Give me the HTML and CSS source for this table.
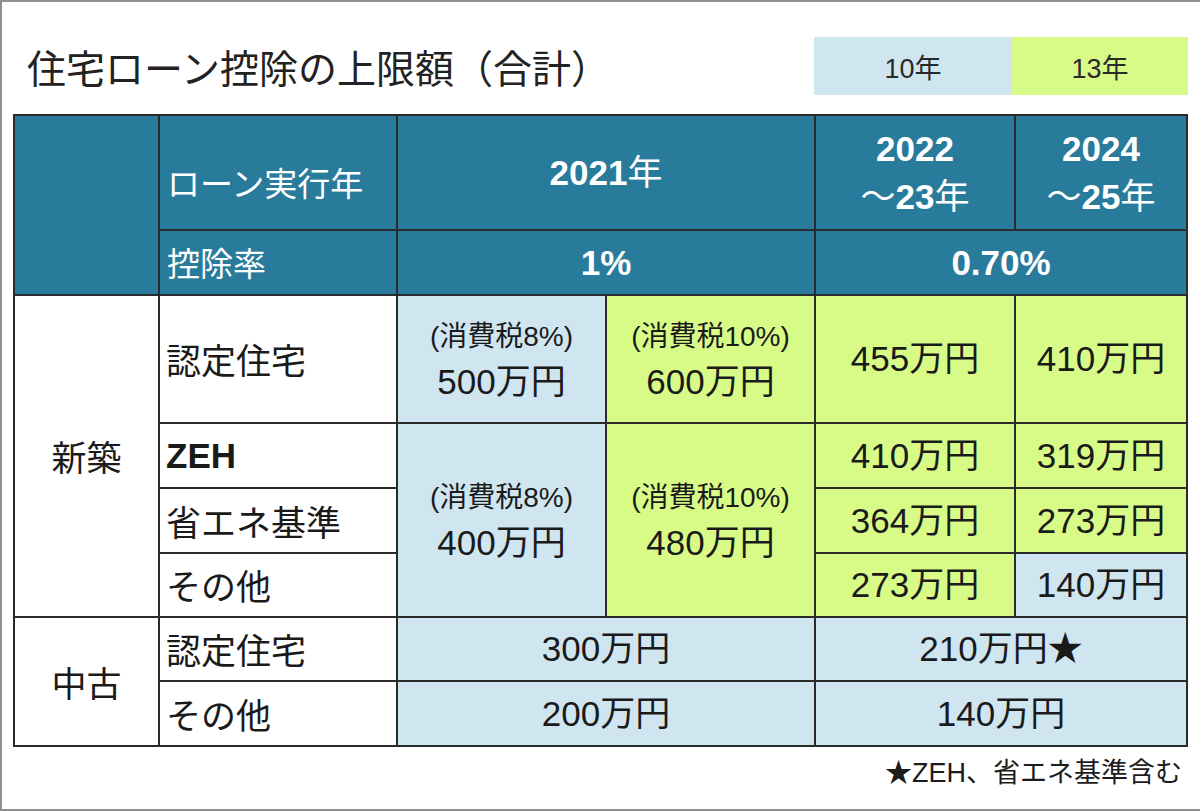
FILE: index.html
```html
<!DOCTYPE html>
<html lang="ja">
<head>
<meta charset="utf-8">
<title>住宅ローン控除の上限額（合計）</title>
<link rel="stylesheet" href="styles.css">
</head>
<body>
<div class="page">
  <header class="top">
    <h1 class="title">住宅ローン控除の上限額（合計）</h1>
    <div class="legend">
      <div class="legend-item blue">10年</div>
      <div class="legend-item green">13年</div>
    </div>
  </header>

  <div class="table">
    <div class="cell head corner"></div>
    <div class="cell head label-head loan">ローン実行年</div>
    <div class="cell head bold span2">2021<span class="reg">年</span></div>
    <div class="cell head bold stack"><span>2022</span><span><span class="reg">〜</span>23<span class="reg">年</span></span></div>
    <div class="cell head bold stack"><span>2024</span><span><span class="reg">〜</span>25<span class="reg">年</span></span></div>

    <div class="cell head label-head">控除率</div>
    <div class="cell head bold span2">1%</div>
    <div class="cell head bold span2">0.70%</div>

    <div class="cell group rspan4">新築</div>
    <div class="cell label">認定住宅</div>
    <div class="cell blue stack2"><span class="small">(消費税8%)</span><span>500万円</span></div>
    <div class="cell green stack2"><span class="small">(消費税10%)</span><span>600万円</span></div>
    <div class="cell green">455万円</div>
    <div class="cell green">410万円</div>

    <div class="cell label zeh">ZEH</div>
    <div class="cell blue stack2 rspan3"><span class="small">(消費税8%)</span><span>400万円</span></div>
    <div class="cell green stack2 rspan3"><span class="small">(消費税10%)</span><span>480万円</span></div>
    <div class="cell green">410万円</div>
    <div class="cell green">319万円</div>

    <div class="cell label">省エネ基準</div>
    <div class="cell green">364万円</div>
    <div class="cell green">273万円</div>

    <div class="cell label">その他</div>
    <div class="cell green">273万円</div>
    <div class="cell blue">140万円</div>

    <div class="cell group rspan2">中古</div>
    <div class="cell label">認定住宅</div>
    <div class="cell blue span2">300万円</div>
    <div class="cell blue span2">210万円★</div>

    <div class="cell label">その他</div>
    <div class="cell blue span2">200万円</div>
    <div class="cell blue span2">140万円</div>
  </div>

  <p class="note">★ZEH、省エネ基準含む</p>
</div>
</body>
</html>
```

FILE: styles.css
```css
* {
  box-sizing: border-box;
  margin: 0;
  padding: 0;
}

html, body {
  margin: 0;
  background: #ffffff;
}

body {
  width: 1200px;
  height: 811px;
  overflow: hidden;
  font-family: "Liberation Sans", "Noto Sans CJK JP", sans-serif;
  color: #1c1c1c;
}

.page {
  width: 1200px;
  height: 811px;
  border-top: 2px solid #8f8f8f;
  border-left: 2px solid #8f8f8f;
  border-bottom: 2px solid #8f8f8f;
  padding: 35px 0 0 11px;
}

.top {
  display: flex;
  justify-content: space-between;
  align-items: center;
  width: 1175px;
  height: 58px;
  margin-bottom: 19px;
}

.title {
  font-family: "Noto Sans CJK JP", sans-serif;
  font-weight: 400;
  font-size: 39px;
  line-height: 58px;
  margin-left: 14px;
  color: #222;
}

.legend {
  display: flex;
  height: 58px;
}

.legend-item {
  display: flex;
  align-items: center;
  justify-content: center;
  font-size: 27px;
  color: #2a2a2a;
}

.legend-item.blue {
  width: 198px;
  background: #cfe6f1;
}

.legend-item.green {
  width: 176px;
  background: #d8fa87;
}

.table {
  display: grid;
  grid-template-columns: 143px 236px 207px 207px 198px 170px;
  grid-template-rows: 113px 63px 126px 63px 63px 62px 62px 63px;
  gap: 2px;
  width: 1175px;
  border: 2px solid #2b2b2b;
  background: #2b2b2b;
}

.cell {
  display: flex;
  align-items: center;
  justify-content: center;
  background: #ffffff;
  font-size: 35px;
  line-height: 1.2;
  color: #1a1a1a;
  white-space: nowrap;
}

.head {
  background: #297b9c;
  color: #ffffff;
}

.corner {
  grid-row: span 2;
}

.label-head {
  justify-content: flex-start;
  padding-left: 7px;
  font-family: "Noto Sans CJK JP", sans-serif;
  font-size: 33px;
}

.loan {
  padding-top: 20px;
}

.bold {
  font-weight: 700;
  font-size: 35px;
}

.reg {
  font-weight: 400;
}

.stack {
  flex-direction: column;
  line-height: 48px;
}

.span2 {
  grid-column: span 2;
}

.rspan2 {
  grid-row: span 2;
}

.rspan3 {
  grid-row: span 3;
}

.rspan4 {
  grid-row: span 4;
}

.group {
  font-family: "Noto Sans CJK JP", sans-serif;
  font-size: 35px;
}

.label {
  justify-content: flex-start;
  padding-left: 6px;
  font-family: "Noto Sans CJK JP", sans-serif;
  font-size: 35px;
}

.label.zeh {
  font-family: "Liberation Sans", sans-serif;
  font-weight: 700;
  font-size: 35px;
}

.blue {
  background: #cfe6f1;
}

.green {
  background: #d8fa87;
}

.stack2 {
  flex-direction: column;
  line-height: 45px;
}

.small {
  font-size: 28px;
}

.note {
  width: 1175px;
  padding-right: 6px;
  margin-top: 6px;
  text-align: right;
  font-size: 27px;
  line-height: 40px;
  color: #1c1c1c;
}
```
